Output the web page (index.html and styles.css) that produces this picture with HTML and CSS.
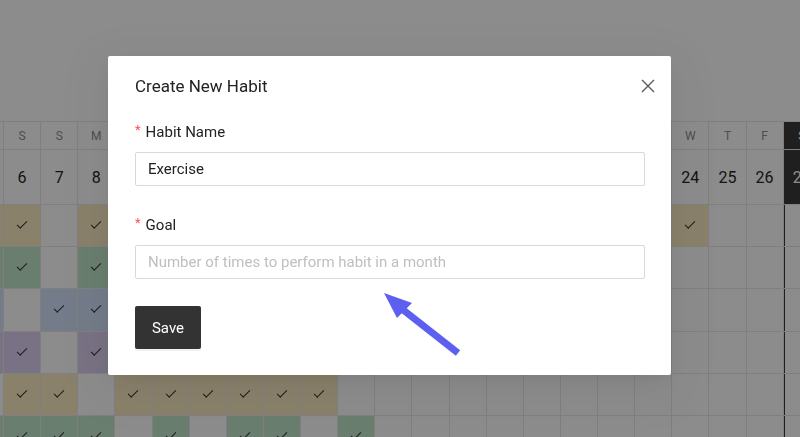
FILE: index.html
```html
<!DOCTYPE html>
<html lang="en">
<head>
<meta charset="utf-8">
<title>Habit Tracker</title>
<link rel="stylesheet" href="styles.css">
</head>
<body>
<div class="page">
  <div class="top"></div>
  <div class="grid">
    <div class="hd">F</div><div class="hd">S</div><div class="hd">S</div><div class="hd">M</div><div class="hd">T</div><div class="hd">W</div><div class="hd">T</div><div class="hd">F</div><div class="hd">S</div><div class="hd">S</div><div class="hd">M</div><div class="hd">T</div><div class="hd">W</div><div class="hd">T</div><div class="hd">F</div><div class="hd">S</div><div class="hd">S</div><div class="hd">M</div><div class="hd">T</div><div class="hd">W</div><div class="hd">T</div><div class="hd">F</div><div class="hd today">S</div><div class="hd">S</div>
    <div class="num">5</div><div class="num">6</div><div class="num">7</div><div class="num">8</div><div class="num">9</div><div class="num">10</div><div class="num">11</div><div class="num">12</div><div class="num">13</div><div class="num">14</div><div class="num">15</div><div class="num">16</div><div class="num">17</div><div class="num">18</div><div class="num">19</div><div class="num">20</div><div class="num">21</div><div class="num">22</div><div class="num">23</div><div class="num">24</div><div class="num">25</div><div class="num">26</div><div class="num today">27</div><div class="num">28</div>

    <div class="c y"></div><div class="c y"></div><div class="c"></div><div class="c y"></div><div class="c y"></div><div class="c"></div><div class="c y"></div><div class="c y"></div><div class="c"></div><div class="c y"></div><div class="c y"></div><div class="c"></div><div class="c y"></div><div class="c"></div><div class="c y"></div><div class="c y"></div><div class="c"></div><div class="c y"></div><div class="c"></div><div class="c y"></div><div class="c"></div><div class="c"></div><div class="c tcol"></div><div class="c"></div>

    <div class="c g"></div><div class="c g"></div><div class="c"></div><div class="c g"></div><div class="c g"></div><div class="c"></div><div class="c g"></div><div class="c"></div><div class="c g"></div><div class="c g"></div><div class="c"></div><div class="c g"></div><div class="c"></div><div class="c g"></div><div class="c"></div><div class="c g"></div><div class="c"></div><div class="c"></div><div class="c"></div><div class="c"></div><div class="c"></div><div class="c"></div><div class="c tcol"></div><div class="c"></div>

    <div class="c b"></div><div class="c"></div><div class="c b"></div><div class="c b"></div><div class="c"></div><div class="c b"></div><div class="c"></div><div class="c b"></div><div class="c b"></div><div class="c"></div><div class="c b"></div><div class="c"></div><div class="c"></div><div class="c b"></div><div class="c"></div><div class="c"></div><div class="c"></div><div class="c"></div><div class="c"></div><div class="c"></div><div class="c"></div><div class="c"></div><div class="c tcol"></div><div class="c"></div>

    <div class="c p"></div><div class="c p"></div><div class="c"></div><div class="c p"></div><div class="c"></div><div class="c p"></div><div class="c p"></div><div class="c"></div><div class="c"></div><div class="c p"></div><div class="c"></div><div class="c p"></div><div class="c"></div><div class="c"></div><div class="c"></div><div class="c"></div><div class="c"></div><div class="c"></div><div class="c"></div><div class="c"></div><div class="c"></div><div class="c"></div><div class="c tcol"></div><div class="c"></div>

    <div class="c"></div><div class="c y"></div><div class="c y"></div><div class="c"></div><div class="c y"></div><div class="c y"></div><div class="c y"></div><div class="c y"></div><div class="c y"></div><div class="c y"></div><div class="c"></div><div class="c"></div><div class="c"></div><div class="c"></div><div class="c"></div><div class="c"></div><div class="c"></div><div class="c"></div><div class="c"></div><div class="c"></div><div class="c"></div><div class="c"></div><div class="c tcol"></div><div class="c"></div>

    <div class="c g"></div><div class="c g"></div><div class="c g"></div><div class="c g"></div><div class="c"></div><div class="c g"></div><div class="c"></div><div class="c g"></div><div class="c g"></div><div class="c"></div><div class="c g"></div><div class="c"></div><div class="c"></div><div class="c"></div><div class="c"></div><div class="c"></div><div class="c"></div><div class="c"></div><div class="c"></div><div class="c"></div><div class="c"></div><div class="c"></div><div class="c tcol"></div><div class="c"></div>
  </div>
</div>

<div class="mask"></div>

<div class="modal" role="dialog" aria-label="Create New Habit">
  <div class="modal-head">
    <h2 class="modal-title">Create New Habit</h2>
    <button class="close" aria-label="Close">
      <svg width="14" height="14" viewBox="0 0 14 14"><path d="M1 1L13 13M13 1L1 13" stroke="#5a5a5a" stroke-width="1.4" fill="none"/></svg>
    </button>
  </div>
  <form class="form">
    <label class="label"><span class="req">*</span>Habit Name</label>
    <input class="input" type="text" value="Exercise">
    <label class="label label-2"><span class="req">*</span>Goal</label>
    <input class="input" type="text" placeholder="Number of times to perform habit in a month">
    <button class="save" type="button">Save</button>
  </form>
</div>

<svg class="arrow" width="100" height="80" viewBox="0 0 100 80">
  <line x1="32" y1="29" x2="88" y2="73" stroke="#5d5ff0" stroke-width="7"/>
  <polygon points="14,13 42,23 27,38" fill="#5d5ff0"/>
</svg>
</body>
</html>
```
FILE: styles.css
```css
html, body {
  margin: 0;
  padding: 0;
  background: #fff;
  overflow: hidden;
  width: 800px;
  height: 437px;
  font-family: Roboto, "Noto Sans", sans-serif;
}

.page {
  width: 800px;
  height: 437px;
  overflow: hidden;
}

.top {
  height: 121px;
}

.grid {
  display: grid;
  grid-template-columns: repeat(24, 36.125px);
  grid-template-rows: 27px 54px repeat(6, 41.2px);
  gap: 1px;
  padding-top: 1px;
  background: #e8e8e8;
  margin-left: -33.1px;
  width: max-content;
}

.hd, .num, .c {
  background: #fff;
  display: flex;
  align-items: center;
  justify-content: center;
}

.hd {
  font-size: 12px;
  color: #8e8e8e;
}

.num {
  font-size: 16px;
  color: #262626;
}

.hd.today, .num.today {
  background: #3a3a3a;
  color: #fff;
}

.c.tcol {
  box-shadow: inset 1px 0 0 #3a3a3a;
}

.c.y { background: #fbecc4; }
.c.g { background: #c2e6cd; }
.c.b { background: #d4e0fa; }
.c.p { background: #dccff0; }

.c.y::after, .c.g::after, .c.b::after, .c.p::after {
  content: "";
  width: 9px;
  height: 4px;
  border-left: 1.5px solid #333;
  border-bottom: 1.5px solid #333;
  transform: translateY(-2px) rotate(-45deg);
}

.mask {
  position: fixed;
  inset: 0;
  background: rgba(0, 0, 0, 0.45);
}

.modal {
  position: absolute;
  left: 108px;
  top: 56px;
  width: 563px;
  height: 319px;
  box-sizing: border-box;
  background: #fff;
  border-radius: 2px;
  padding: 18px 26px 26px 27px;
  box-shadow: 0 6px 16px -8px rgba(0,0,0,.08), 0 9px 28px 0 rgba(0,0,0,.05), 0 12px 48px 16px rgba(0,0,0,.03);
  color: #222;
}

.modal-head {
  display: flex;
  align-items: center;
  justify-content: space-between;
  height: 24px;
}

.modal-title {
  margin: 0;
  font-size: 17px;
  font-weight: 400;
  line-height: 24px;
  color: #222;
}

.close {
  width: 24px;
  height: 24px;
  margin-right: -15px;
  padding: 0;
  border: 0;
  background: transparent;
  display: flex;
  align-items: center;
  justify-content: center;
}

.form {
  display: flex;
  flex-direction: column;
  align-items: flex-start;
  margin-top: 22px;
}

.label {
  font-size: 15px;
  line-height: 22px;
  padding-top: 1px;
  color: #222;
  display: flex;
  align-items: center;
}

.label-2 {
  margin-top: 27px;
}

.req {
  color: #ff4d4f;
  font-size: 13px;
  margin-right: 5px;
  position: relative;
  top: -2px;
}

.input {
  margin-top: 9px;
  width: 510px;
  height: 34px;
  box-sizing: border-box;
  border: 1px solid #d9d9d9;
  border-radius: 2px;
  padding: 0 12px;
  font-family: inherit;
  font-size: 15px;
  color: #222;
  outline: none;
}

.input::placeholder {
  color: #bfbfbf;
}

.save {
  margin-top: 27px;
  width: 66px;
  height: 43px;
  border: 0;
  border-radius: 2px;
  background: #333;
  color: #fff;
  font-family: inherit;
  font-size: 15px;
  box-shadow: 0 2px 0 rgba(0,0,0,.05);
}

.arrow {
  position: absolute;
  left: 370px;
  top: 280px;
}
```
